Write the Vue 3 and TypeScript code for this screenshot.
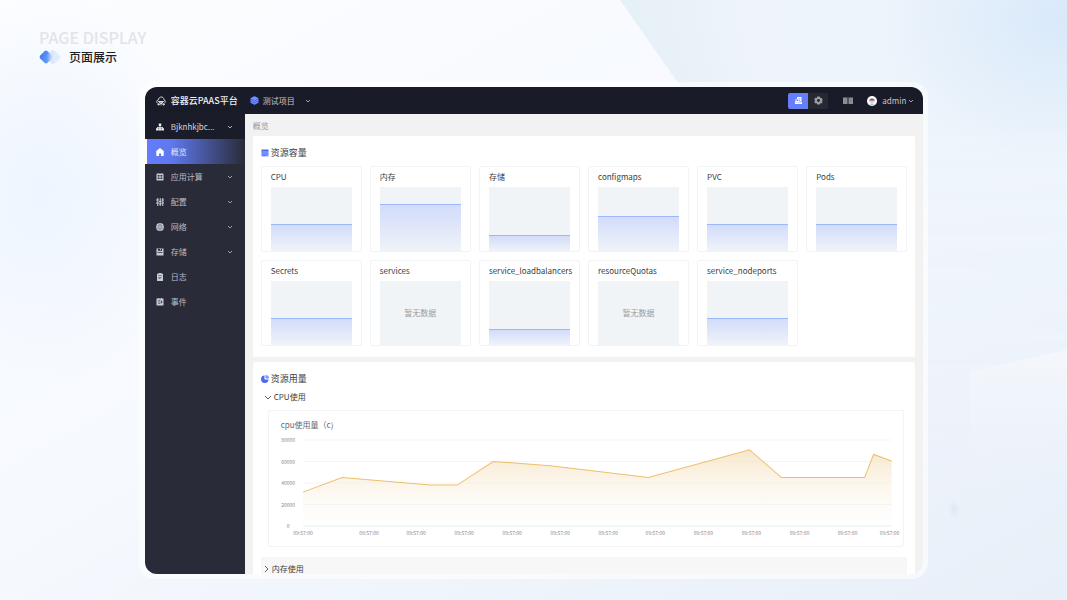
<script setup lang="ts">
import { ref } from 'vue'

interface MenuItem {
  name: string
  icon: string
  expandable: boolean
}

interface Quota {
  name: string
  level: number | null
}

const menu: MenuItem[] = [
  { name: '概览', icon: 'home', expandable: false },
  { name: '应用计算', icon: 'grid', expandable: true },
  { name: '配置', icon: 'sliders', expandable: true },
  { name: '网络', icon: 'globe', expandable: true },
  { name: '存储', icon: 'disk', expandable: true },
  { name: '日志', icon: 'clipboard', expandable: false },
  { name: '事件', icon: 'event', expandable: false },
]
const active = ref('概览')

const quotas: Quota[] = [
  { name: 'CPU', level: 42 },
  { name: '内存', level: 74 },
  { name: '存储', level: 25 },
  { name: 'configmaps', level: 54 },
  { name: 'PVC', level: 42 },
  { name: 'Pods', level: 42 },
  { name: 'Secrets', level: 42 },
  { name: 'services', level: null },
  { name: 'service_loadbalancers', level: 25 },
  { name: 'resourceQuotas', level: null },
  { name: 'service_nodeports', level: 42 },
]

const cpuOpen = ref(true)
const memoryOpen = ref(false)

const yMax = 80000
const yTicks = [80000, 60000, 40000, 20000, 0]
const xTicks = [0, 66, 113, 161, 209, 257, 305, 352, 400, 448, 496, 544, 586]
const span = 588
const plotHeight = 86

const usage: [number, number][] = [
  [0, 31500], [39, 45000], [127, 38000], [154, 38000], [190, 60000], [247, 56000],
  [345, 45000], [446, 71000], [478, 45000], [561, 45000], [570, 66500], [588, 60500],
]

const yOf = (value: number): number => plotHeight - (value / yMax) * plotHeight
const linePoints = usage.map(([x, v]) => `${x},${yOf(v).toFixed(1)}`).join(' ')
const areaPoints = `0,${plotHeight} ${linePoints} ${span},${plotHeight}`
const percent = (x: number): string => `${((x / span) * 100).toFixed(2)}%`
</script>

<template>
  <div class="page">
    <svg class="backdrop" viewBox="0 0 1067 600" preserveAspectRatio="none" aria-hidden="true">
      <defs>
        <linearGradient id="bg-base" x1="0" y1="0" x2="1" y2="1">
          <stop offset="0" stop-color="#fcfdff" />
          <stop offset="0.45" stop-color="#f6f9fe" />
          <stop offset="1" stop-color="#e8eff8" />
        </linearGradient>
        <linearGradient id="bg-ray" x1="620" y1="0" x2="860" y2="-60" gradientUnits="userSpaceOnUse">
          <stop offset="0" stop-color="#e6f0f7" />
          <stop offset="0.5" stop-color="#eef4fa" />
          <stop offset="1" stop-color="#edf4fb" />
        </linearGradient>
        <linearGradient id="ray-fade" x1="0" y1="0" x2="0" y2="1">
          <stop offset="0.2" stop-color="#fff" />
          <stop offset="0.8" stop-color="#000" />
        </linearGradient>
        <mask id="ray-mask"><rect width="1067" height="600" fill="url(#ray-fade)" /></mask>
        <radialGradient id="bg-corner">
          <stop offset="0" stop-color="#d9e9fa" />
          <stop offset="1" stop-color="#d9e9fa" stop-opacity="0" />
        </radialGradient>
        <radialGradient id="bg-left">
          <stop offset="0" stop-color="#edf5ff" />
          <stop offset="1" stop-color="#edf5ff" stop-opacity="0" />
        </radialGradient>
        <linearGradient id="bg-shard" x1="0" y1="0" x2="0" y2="1">
          <stop offset="0" stop-color="#f4f7fc" />
          <stop offset="1" stop-color="#ebf1fa" stop-opacity="0" />
        </linearGradient>
        <radialGradient id="bg-spot">
          <stop offset="0" stop-color="#e0e7f0" />
          <stop offset="1" stop-color="#e0e7f0" stop-opacity="0" />
        </radialGradient>
      </defs>
      <rect width="1067" height="600" fill="url(#bg-base)" />
      <path d="M620 0H1067V600H940L690 100Z" fill="url(#bg-ray)" mask="url(#ray-mask)" />
      <ellipse cx="1060" cy="20" rx="180" ry="140" fill="url(#bg-corner)" />
      <ellipse cx="40" cy="190" rx="150" ry="200" fill="url(#bg-left)" />
      <path d="M970 372L1067 350V520H970Z" fill="url(#bg-shard)" />
      <ellipse cx="954" cy="509" rx="6" ry="10" fill="url(#bg-spot)" />
    </svg>

    <header class="title">
      <p class="title-en">PAGE DISPLAY</p>
      <div class="title-row">
        <svg class="title-mark" viewBox="0 0 22 14" aria-hidden="true">
          <defs>
            <linearGradient id="mark-a" x1="0" y1="0.3" x2="1" y2="0.7">
              <stop offset="0" stop-color="#3f7af3" />
              <stop offset="1" stop-color="#6fa8f9" />
            </linearGradient>
            <linearGradient id="mark-b" x1="7" y1="0" x2="15" y2="0" gradientUnits="userSpaceOnUse">
              <stop offset="0" stop-color="#7fb0fa" stop-opacity="0" />
              <stop offset="0.6" stop-color="#cfdffd" stop-opacity="0.8" />
              <stop offset="1" stop-color="#e1eafe" />
            </linearGradient>
          </defs>
          <path d="M5.500 1.200Q7 0 8.500 1.200L12.800 5.500Q14 7 12.800 8.500L8.500 12.800Q7 14 5.500 12.800L1.200 8.500Q0 7 1.200 5.500Z" fill="url(#mark-a)" />
          <path d="M12 1Q14 -.8 16 1L20.300 5Q22 7 20.300 9L16 13Q14 14.800 12 13L7.700 9Q6 7 7.700 5Z" fill="url(#mark-b)" />
        </svg>
        <h1>页面展示</h1>
      </div>
    </header>

    <div class="frame">
      <div class="app">
        <div class="topbar">
          <svg class="logo" viewBox="0 0 20 20" fill="none" stroke="#e9ebf2" stroke-width="1.8" stroke-linecap="round" aria-hidden="true">
            <path d="M3 14.500C0 12 1.500 8.500 4.500 8C5 4.500 7.500 2 10.500 2C13.500 2 15.500 4 16 7.500C19 8.500 19.500 12 17 14.500" />
            <path d="M5 11H15M6 15L8 11.500M14 15L12 11.500M10 11V18" />
            <circle cx="5" cy="17" r="1.300" /><circle cx="15" cy="17" r="1.300" /><circle cx="10" cy="14.500" r="1" />
          </svg>
          <strong class="brand">容器云PAAS平台</strong>
          <button class="project" type="button">
            <svg class="i9" viewBox="0 0 18 18" aria-hidden="true">
              <path d="M9 0L17 4V13.500L9 18L1 13.500V4Z" fill="#4965e8" />
              <path d="M9 1L17 5L9 9L1 5Z" fill="#7690ff" />
              <path d="M1 8L9 12L17 8M1 12L9 16L17 12" fill="none" stroke="#8ba0ff" stroke-width="1.400" />
            </svg>
            <span>测试项目</span>
            <svg class="chev" viewBox="0 0 6 6" aria-hidden="true"><path d="M1 2L3 4L5 2" /></svg>
          </button>
          <div class="tools">
            <div class="switch">
              <button class="on" type="button" aria-label="工作台">
                <svg class="i9" viewBox="0 0 18 18" fill="#fff" aria-hidden="true">
                  <path d="M7 2H15V11H12V9H8V7H6V3Z" />
                  <path d="M3 6H5V10H11V12H16V16H2V11H3Z" />
                  <path d="M9 4.500H13V7H9Z" fill="#9eb0ff" />
                  <path d="M4 13.500H14" stroke="#8da1ff" />
                </svg>
              </button>
              <button type="button" aria-label="设置">
                <svg class="i9" viewBox="0 0 18 18" aria-hidden="true">
                  <path d="M6.500 1H11.500L12.500 4L15.500 4L17.500 8L16 9.500L17 12.500L14.500 15L12.500 14.500L11.500 17H6.500L5.500 14.500L3 15L.5 11.500L2 9L.5 6L3 3.500L5.500 4Z" fill="#9c9d9f" />
                  <circle cx="9" cy="9" r="2.800" fill="#262833" />
                </svg>
              </button>
            </div>
            <button class="book" type="button" aria-label="文档">
              <svg viewBox="0 0 20 16" aria-hidden="true">
                <path d="M0 1H9V14H0ZM11 1H20V14H11Z" fill="#8c8d8e" />
                <path d="M9 1H11V15H9Z" fill="#55565e" />
                <path d="M13 4H18M13 7H18" stroke="#77787c" />
              </svg>
            </button>
            <button class="user" type="button">
              <svg class="avatar" viewBox="0 0 20 20" aria-hidden="true">
                <circle cx="10" cy="10" r="10" fill="#fff" />
                <path d="M5 18C6 14 14 14 15 18C12 20 8 20 5 18Z" fill="#9ed6e4" />
                <circle cx="10" cy="10.500" r="4.500" fill="#f2c9bd" />
                <path d="M4.500 11C3 3 17 3 15.500 11L14 8.500C11 9 8 9 6 8.500Z" fill="#5c5f77" />
              </svg>
              <span>admin</span>
              <svg class="chev" viewBox="0 0 6 6" aria-hidden="true"><path d="M1 2L3 4L5 2" /></svg>
            </button>
          </div>
        </div>

        <div class="body">
          <nav class="sidebar">
            <button class="cluster" type="button">
              <svg class="i8" viewBox="0 0 16 16" fill="#e9ebf2" aria-hidden="true">
                <path d="M5.500 1H10.500V6H9V8H14V10.500H16V15H11V10.500H12.500V9.500H9V10.500H10.500V15H5.500V10.500H7V9.500H3.500V10.500H5V15H0V10.500H2V8H7V6H5.500Z" />
              </svg>
              <span>Bjknhkjbc...</span>
              <svg class="chev" viewBox="0 0 6 6" aria-hidden="true"><path d="M1 2L3 4L5 2" /></svg>
            </button>
            <button
              v-for="item in menu"
              :key="item.name"
              type="button"
              class="item"
              :class="{ active: active === item.name }"
              @click="active = item.name"
            >
              <svg class="i8" viewBox="0 0 16 16" fill="currentColor" aria-hidden="true">
                <path v-if="item.icon === 'home'" fill-rule="evenodd" d="M8 0L15.500 6V14.500Q15.500 16 14 16H2Q.5 16 .5 14.500V6ZM6 16H10V11H6Z" />
                <path v-else-if="item.icon === 'grid'" fill-rule="evenodd" d="M2 1H14Q15 1 15 2V14Q15 15 14 15H2Q1 15 1 14V2Q1 1 2 1ZM3.500 4V7H7V4ZM9 4V7H12.500V4ZM3.500 9V12H7V9ZM9 9V12H12.500V9Z" />
                <path v-else-if="item.icon === 'sliders'" d="M2.500 0H4.500V3H6V5H4.500V9H6V11H4.500V16H2.500V11H0V9H2.500V5H0V3H2.500ZM7.500 0H9.500V6H11V8H9.500V11H11V13H9.500V16H7.500V13H6V11H7.500V8H6V6H7.500ZM12.500 0H14.500V3H16V5H14.500V9H16V11H14.500V16H12.500V11H11V9H12.500V5H11V3H12.500Z" />
                <g v-else-if="item.icon === 'globe'">
                  <circle cx="8" cy="8" r="7.800" />
                  <path d="M1 5.500H15M1 10.500H15M8 0V16M8 1C3 5 3 11 8 15C13 11 13 5 8 1" fill="none" stroke="#2a2b38" stroke-width="0.500" />
                </g>
                <path v-else-if="item.icon === 'disk'" fill-rule="evenodd" d="M1 1H15V15H1ZM4 2V5.500H12V2H10V4H8V2ZM3 8.500V10H13V8.500Z" />
                <path v-else-if="item.icon === 'clipboard'" fill-rule="evenodd" d="M5 0H11V1.500H14V16H2V1.500H5ZM5 5V6H11V5ZM5 8V9H11V8ZM5 11V12H9V11Z" />
                <path v-else fill-rule="evenodd" d="M1 1H4V0H6V1H10V0H12V1H15V15H1ZM4 5V6.500H9V5ZM4 9.500V11H9V9.500ZM10 5L13 8L10 11Z" />
              </svg>
              <span>{{ item.name }}</span>
              <svg v-if="item.expandable" class="chev" viewBox="0 0 6 6" aria-hidden="true"><path d="M1 2L3 4L5 2" /></svg>
            </button>
            <div class="rest"></div>
          </nav>

          <main class="main">
            <div class="crumb">概览</div>

            <section class="card">
              <h2>
                <svg class="i8" viewBox="0 0 16 16" aria-hidden="true">
                  <path d="M1 1H15V5H1Z" fill="#4b68f5" /><path d="M1 6H15V15H1Z" fill="#8197ff" />
                  <path d="M0 5.500H16M1 10H9M10 10H15M3 13H9" stroke="#4b68f5" stroke-width="1.200" />
                </svg>
                资源容量
              </h2>
              <div class="quotas">
                <article v-for="q in quotas" :key="q.name" class="quota">
                  <h3>{{ q.name }}</h3>
                  <div class="gauge">
                    <div v-if="q.level !== null" class="fill" :style="{ height: q.level + '%' }"></div>
                    <span v-else class="empty">暂无数据</span>
                  </div>
                </article>
              </div>
            </section>

            <section class="card usage">
              <h2>
                <svg class="i8" viewBox="0 0 16 16" aria-hidden="true">
                  <path d="M7 1A7.500 7.500 0 1 0 15 9H7Z" fill="#4b68f5" />
                  <path d="M9 0A7 7 0 0 1 16 7H9Z" fill="#7d94ff" />
                </svg>
                资源用量
              </h2>
              <button class="fold open" type="button" :aria-expanded="cpuOpen" @click="cpuOpen = !cpuOpen">
                <svg class="chev" :class="{ closed: !cpuOpen }" viewBox="0 0 6 6" aria-hidden="true"><path d="M0 2L3 5L6 2" /></svg>
                CPU使用
              </button>
              <div v-if="cpuOpen" class="chart">
                <h3>cpu使用量（c)</h3>
                <div class="plot">
                  <div class="y-axis"><span v-for="t in yTicks" :key="t">{{ t }}</span></div>
                  <svg class="canvas" role="img" aria-label="cpu使用量">
                    <defs>
                      <linearGradient id="area" x1="0" y1="0" x2="0" y2="1">
                        <stop offset="0" stop-color="#f5e3c2" stop-opacity="0.85" />
                        <stop offset="1" stop-color="#fdfaf4" stop-opacity="0.1" />
                      </linearGradient>
                    </defs>
                    <svg width="100%" :height="plotHeight" :viewBox="`0 0 ${span} ${plotHeight}`" preserveAspectRatio="none" overflow="visible">
                      <line v-for="t in yTicks" :key="t" x1="0" :x2="span" :y1="yOf(t)" :y2="yOf(t)" :class="t ? 'grid' : 'base'" />
                      <polygon :points="areaPoints" fill="url(#area)" />
                      <polyline :points="linePoints" class="line" />
                    </svg>
                    <text v-for="x in xTicks" :key="x" :x="percent(x)" :y="plotHeight + 9" class="tick">09:57:00</text>
                  </svg>
                </div>
              </div>
              <button class="fold shaded" type="button" :aria-expanded="memoryOpen" @click="memoryOpen = !memoryOpen">
                <svg class="chev" :class="{ closed: !memoryOpen }" viewBox="0 0 6 6" aria-hidden="true"><path d="M0 2L3 5L6 2" /></svg>
                内存使用
              </button>
            </section>
          </main>
        </div>
      </div>
    </div>
  </div>
</template>

<style>
body {
  background: #f6f9fe;
}
</style>

<style scoped>
.page {
  position: relative;
  box-sizing: border-box;
  height: 100vh;
  display: flex;
  flex-direction: column;
  padding: 27px 0 21px;
  overflow: hidden;
  font-family: "Noto Sans CJK SC", "Noto Sans", sans-serif;
  font-size: 8px;
  line-height: 12px;
  color: #3a3b40;
}

.backdrop {
  position: absolute;
  inset: 0;
  width: 100%;
  height: 100%;
}

h1,
h2,
h3,
p {
  margin: 0;
  font-weight: 400;
}

button {
  margin: 0;
  padding: 0;
  border: 0;
  background: none;
  font: inherit;
  color: inherit;
  display: flex;
  align-items: center;
  cursor: pointer;
}

svg {
  display: block;
  flex: none;
}

.title {
  position: relative;
  height: 55px;
  padding-left: 39px;
}

.title-en {
  font-size: 16px;
  line-height: 20px;
  font-weight: 500;
  color: #e2e4e9;
}

.title-row {
  display: flex;
  align-items: center;
  gap: 8px;
  height: 20px;
}

.title-mark {
  width: 22px;
  height: 14px;
}

h1 {
  font-size: 12px;
  line-height: 18px;
  font-weight: 500;
  color: #1d1e22;
}

.frame {
  position: relative;
  flex: 1;
  min-height: 0;
  display: flex;
  margin: 0 13%;
  padding: 5px 5px 5px 6px;
  border-radius: 16px;
  background: rgba(255, 255, 255, 0.6);
}

.app {
  flex: 1;
  min-width: 0;
  display: flex;
  flex-direction: column;
  border-radius: 12px;
  overflow: hidden;
}

.topbar {
  flex: none;
  display: flex;
  align-items: center;
  height: 27px;
  padding: 0 9px 0 11px;
  background: #1a1b28;
  color: #c2c3ca;
}

.logo {
  width: 10px;
  height: 10px;
}

.brand {
  margin-left: 5px;
  font-size: 9px;
  font-weight: 500;
  color: #f0f1f5;
}

.project {
  margin-left: 12px;
  gap: 4px;
}

.project .chev {
  margin-left: 6px;
}

.i9 {
  width: 9px;
  height: 9px;
}

.i8 {
  width: 8px;
  height: 8px;
}

.chev {
  width: 6px;
  height: 6px;
  fill: none;
  stroke: currentColor;
  stroke-width: 0.8;
}

.chev.closed {
  transform: rotate(-90deg);
}

.tools {
  margin-left: auto;
  display: flex;
  align-items: center;
}

.switch {
  display: flex;
  border-radius: 2px;
  overflow: hidden;
  background: #262833;
}

.switch button {
  justify-content: center;
  width: 20px;
  height: 16px;
}

.switch .on {
  background: #667efa;
}

.book {
  margin-left: 15px;
}

.book svg {
  width: 10px;
  height: 8px;
}

.user {
  margin-left: 14px;
  gap: 5px;
}

.user .chev {
  margin-left: -3px;
}

.avatar {
  width: 10px;
  height: 10px;
}

.body {
  flex: 1;
  min-height: 0;
  display: flex;
}

.sidebar {
  flex: none;
  display: flex;
  flex-direction: column;
  width: 100px;
  color: #b9bcc8;
}

.cluster,
.item {
  flex: none;
  height: 25px;
  padding: 0 12px 0 11px;
  gap: 7px;
  background: #2a2b38;
}

.cluster {
  background: #1b1c29;
  color: #d4d6de;
}

.sidebar .chev {
  margin-left: auto;
}

.item .i8 {
  color: #c5cad8;
}

.item.active {
  margin-left: 2px;
  padding-left: 9px;
  background: linear-gradient(90deg, #637dfc 0%, #5f78ee 25%, #2a2b38 100%);
  color: #dfe5ff;
}

.item.active .i8 {
  color: #fff;
}

.rest {
  flex: 1;
  background: #2a2b38;
}

.main {
  flex: 1;
  min-width: 0;
  display: flex;
  flex-direction: column;
  gap: 5px;
  padding: 0 8px;
  overflow: hidden;
  background: #f2f2f2;
}

.crumb {
  flex: none;
  height: 17px;
  line-height: 23px;
  color: #98999c;
}

.card {
  flex: none;
  padding: 8px 8px 11px;
  border-radius: 2px;
  background: #fff;
}

h2 {
  display: flex;
  align-items: center;
  gap: 2px;
  height: 17px;
  font-size: 9px;
}

.quotas {
  display: grid;
  grid-template-columns: repeat(6, 1fr);
  gap: 8px;
  margin-top: 5px;
}

h3 {
  font-size: 8px;
}

.quota {
  min-width: 0;
  box-sizing: border-box;
  height: 86px;
  display: flex;
  flex-direction: column;
  padding: 0 9px;
  border: 1px solid #f2f3f5;
  border-radius: 2px;
}

.quota h3 {
  height: 20px;
  line-height: 20px;
  white-space: nowrap;
}

.gauge {
  flex: 1;
  display: flex;
  flex-direction: column;
  justify-content: flex-end;
  background: #f0f4f7;
}

.fill {
  box-sizing: border-box;
  border-top: 1px solid #9ab8fb;
  background: linear-gradient(180deg, #d2dcfb, #eff3f8);
}

.empty {
  margin: auto;
  color: #9a9ca0;
}

.usage {
  padding-bottom: 40px;
}

.fold {
  width: 100%;
  gap: 3px;
}

.fold.open {
  height: 20px;
  padding-left: 4px;
}

.chart {
  margin: 3px 3px 0 7px;
  padding: 6px 12px 12px;
  border: 1px solid #f3f3f5;
  border-radius: 2px;
}

.chart h3 {
  height: 16px;
  line-height: 16px;
  color: #66676b;
}

.plot {
  display: flex;
  gap: 7px;
  margin-top: 7px;
}

.y-axis {
  display: flex;
  flex-direction: column;
  justify-content: space-between;
  width: 15px;
  height: 94px;
  margin: -4px 0;
  font-size: 5px;
  line-height: 8px;
  text-align: center;
  color: #85868b;
}

.canvas {
  flex: 1;
  min-width: 0;
  height: 94px;
  overflow: visible;
}

.grid {
  stroke: #f3f4f6;
}

.base {
  stroke: #e9ebf2;
}

.line {
  fill: none;
  stroke: #edbf6b;
}

.tick {
  font-size: 5px;
  fill: #85868b;
  text-anchor: middle;
}

.fold.shaded {
  height: 24px;
  margin-top: 10px;
  padding-left: 2px;
  background: #f7f7f7;
}
</style>
